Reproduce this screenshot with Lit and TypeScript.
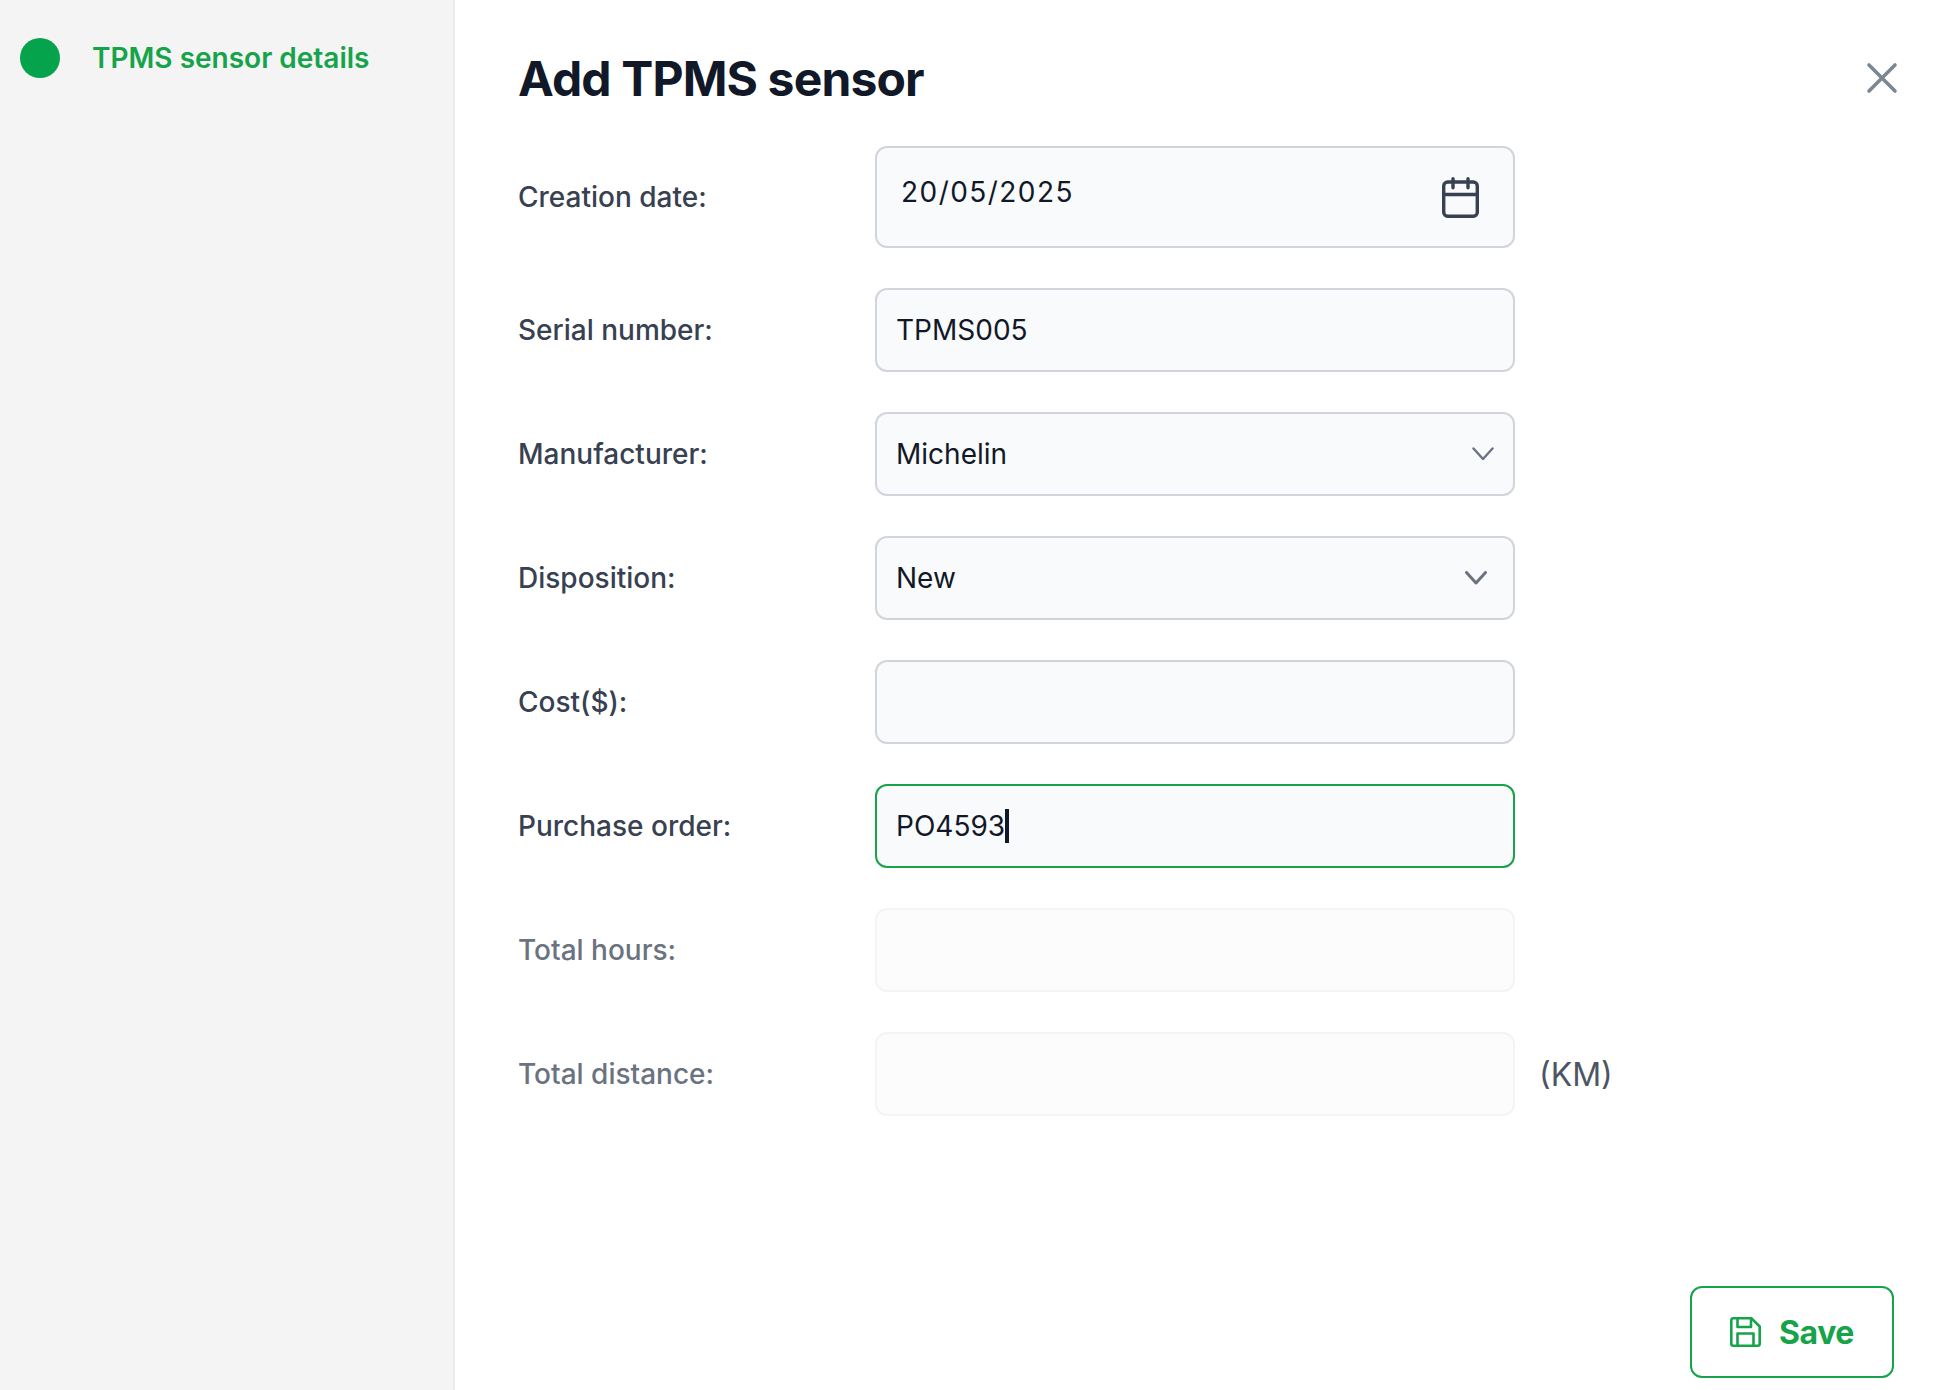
import { LitElement, html, css } from "lit";
import { customElement } from "lit/decorators.js";

@customElement("app-root")
export class AppRoot extends LitElement {
  static styles = css`
    :host { display: flex; width: 100%; height: 1390px; overflow: hidden; background: #fff; font-family: Inter, "Liberation Sans", sans-serif; color: #111827; }
    * { box-sizing: border-box; }
    .side { width: 455px; flex: none; background: #f4f4f4; border-right: 2px solid #ececec; padding: 38px 20px; }
    .step { display: flex; align-items: center; gap: 32px; height: 40px; }
    .dot { width: 40px; height: 40px; border-radius: 50%; background: #05a44c; flex: none; }
    .step-label { font-size: 28px; font-weight: 600; color: #16a34a; }
    .main { flex: 1; display: flex; flex-direction: column; padding: 46px 40px 12px 63px; min-width: 0; }
    .head { display: flex; justify-content: space-between; align-items: center; height: 65px; margin-bottom: 35px; }
    h1 { margin: 0; font-size: 48px; line-height: 65px; font-weight: 700; color: #111827; letter-spacing: -0.85px; }
    .close { display: block; width: 32px; height: 32px; margin: -2px -4px 0 0; }
    .form { display: flex; flex-direction: column; gap: 40px; }
    .row { display: flex; align-items: center; }
    .lbl { width: 357px; flex: none; font-size: 28px; font-weight: 500; color: #374151; }
    .row.off .lbl { color: #6b7280; }
    .field { width: 640px; height: 84px; flex: none; display: flex; align-items: center; justify-content: space-between; background: #f9fafb; border: 2px solid #d1d5db; border-radius: 12px; padding: 0 19px; font-size: 28px; color: #111827; }
    .row.off .field { background: #fcfcfd; border-color: #f3f4f6; }
    .row.focus .field { border-color: #16a34a; justify-content: flex-start; }
    .field.date { height: 102px; padding: 0 34px 0 24px; }
    .date-val { letter-spacing: 1.45px; margin-top: -10px; }
    .caret { display: inline-block; width: 4px; height: 34px; background: #111827; }
    .sel2 svg { margin-right: 7px; }
    .unit { margin-left: 24px; font-size: 32px; color: #4b5563; }
    .foot { margin-top: auto; display: flex; justify-content: flex-end; }
    .save { width: 204px; height: 92px; display: flex; align-items: center; justify-content: center; gap: 18px; background: #fff; border: 2px solid #16a34a; border-radius: 12px; font-size: 32px; font-weight: 700; letter-spacing: -0.4px; color: #16a34a; font-family: inherit; padding: 0; }
  `;

  private row(label: string, content: unknown, cls = "") {
    return html`<div class="row ${cls}"><div class="lbl">${label}</div>${content}</div>`;
  }

  private chevron(sw: number) {
    return html`<svg width="22" height="14" viewBox="0 0 22 14"><path d="M1.5 1.5L11 12 20.5 1.5" fill="none" stroke="#6b7280" stroke-width=${sw} stroke-linecap="round" stroke-linejoin="round"/></svg>`;
  }

  render() {
    return html`
      <aside class="side">
        <div class="step"><span class="dot"></span><span class="step-label">TPMS sensor details</span></div>
      </aside>
      <main class="main">
        <div class="head">
          <h1>Add TPMS sensor</h1>
          <svg class="close" viewBox="0 0 32 32"><path d="M3 3l26 26M29 3L3 29" stroke="#7b8794" stroke-width="3.6" stroke-linecap="round"/></svg>
        </div>
        <div class="form">
          ${this.row("Creation date:", html`<div class="field date"><span class="date-val">20/05/2025</span>
            <svg width="37" height="41" viewBox="0 0 37 41" fill="none" stroke="#374151" stroke-width="3.4" stroke-linecap="round" stroke-linejoin="round"><rect x="1.7" y="5" width="33.6" height="34.3" rx="4"/><path d="M1.7 17.5h33.6M11 1.7v9M26 1.7v9"/></svg></div>`)}
          ${this.row("Serial number:", html`<div class="field">TPMS005</div>`)}
          ${this.row("Manufacturer:", html`<div class="field">Michelin${this.chevron(2.4)}</div>`)}
          ${this.row("Disposition:", html`<div class="field sel2">New${this.chevron(3)}</div>`)}
          ${this.row("Cost($):", html`<div class="field"></div>`)}
          ${this.row("Purchase order:", html`<div class="field">PO4593<span class="caret"></span></div>`, "focus")}
          ${this.row("Total hours:", html`<div class="field"></div>`, "off")}
          ${this.row("Total distance:", html`<div class="field"></div><span class="unit">(KM)</span>`, "off")}
        </div>
        <div class="foot">
          <button class="save">
            <svg width="31" height="30" viewBox="0 0 31 30" fill="none" stroke="#16a34a" stroke-width="2.6" stroke-linejoin="round" stroke-linecap="round"><path d="M3.5 1.3H21.5L29.7 9.5v17.2a2 2 0 0 1-2 2H3.3a2 2 0 0 1-2-2V3.3a2 2 0 0 1 2.2-2z"/><path d="M7.5 1.3V10h13.5V1.3M7.5 28.7V16.5h16v12.2"/></svg>
            Save
          </button>
        </div>
      </main>
    `;
  }
}
